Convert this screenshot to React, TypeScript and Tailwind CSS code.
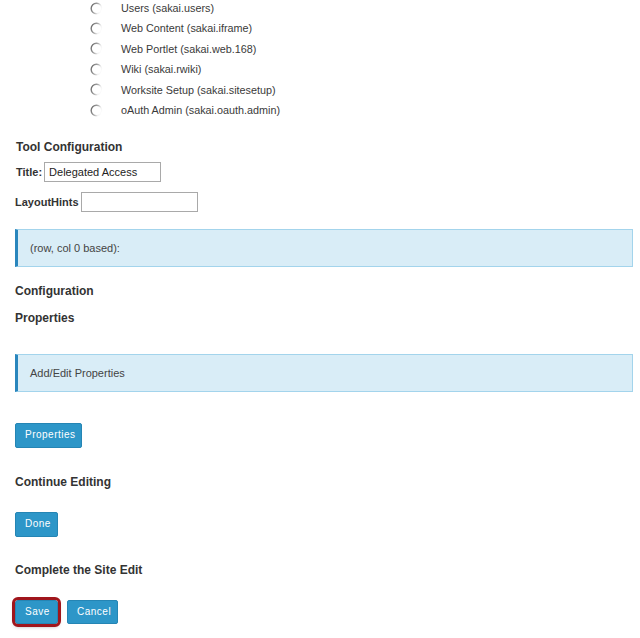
const tools = [
  "Users (sakai.users)",
  "Web Content (sakai.iframe)",
  "Web Portlet (sakai.web.168)",
  "Wiki (sakai.rwiki)",
  "Worksite Setup (sakai.sitesetup)",
  "oAuth Admin (sakai.oauth.admin)",
];

function Radio({ id }: { id: number }) {
  return (
    <svg width="13" height="13" viewBox="0 0 13 13" className="shrink-0">
      <defs>
        <linearGradient id={"rg" + id} x1="0" y1="0.3" x2="1" y2="0.7">
          <stop offset="0" stopColor="#6f6f6f" />
          <stop offset="0.45" stopColor="#a8a8a8" />
          <stop offset="0.75" stopColor="#f0f0f0" />
          <stop offset="1" stopColor="#ffffff" />
        </linearGradient>
      </defs>
      <circle cx="6.5" cy="6.5" r="5.3" fill="#fff" stroke={"url(#rg" + id + ")"} strokeWidth="1.4" />
    </svg>
  );
}

function Heading({ children, className = "" }: { children: React.ReactNode; className?: string }) {
  return (
    <h3 className={"h-[16px] leading-[16px] text-[12px] font-bold text-[#333] " + className}>
      {children}
    </h3>
  );
}

function InfoBox({ children, className = "" }: { children: React.ReactNode; className?: string }) {
  return (
    <div
      className={
        "h-[38px] w-[618px] flex items-center pl-[12px] bg-[#d9edf7] border border-[#a3d4ec] border-l-[3px] border-l-[#2a86bd] text-[11px] text-[#444] " +
        className
      }
    >
      {children}
    </div>
  );
}

function Button({ children, className = "" }: { children: React.ReactNode; className?: string }) {
  return (
    <button
      className={
        "h-[24px] px-[9px] bg-[#2d96c8] border border-[#2585b4] rounded-[2px] text-white text-[10px] tracking-[0.5px] leading-none " +
        className
      }
    >
      {children}
    </button>
  );
}

export default function App() {
  return (
    <div className="w-[640px] h-[638px] overflow-hidden bg-white font-['Liberation_Sans',Arial,sans-serif] text-[#333]">
      <ul className="-mt-[2px] pl-[90px]">
        {tools.map((t, i) => (
          <li key={t} className="h-[20.4px] flex items-center">
            <Radio id={i} />
            <span className="ml-[18px] text-[10.8px] text-[#3a3a3a]">{t}</span>
          </li>
        ))}
      </ul>

      <div className="pl-[15px]">
        <Heading className="mt-[18.6px] pl-[1px]">Tool Configuration</Heading>
        <div className="mt-[7px] flex items-center h-[20px] pl-[1px]">
          <span className="text-[11px] font-bold text-[#333] mr-[2px]">Title:</span>
          <input
            className="h-[20px] w-[117px] border border-[#a9a9a9] px-[4px] text-[11px] text-[#222] outline-none"
            defaultValue="Delegated Access"
          />
        </div>
        <div className="mt-[10px] flex items-center h-[20px]">
          <span className="text-[11px] font-bold text-[#333] mr-[2px]">LayoutHints</span>
          <input className="h-[20px] w-[117px] border border-[#a9a9a9] px-[4px] text-[11px] outline-none" />
        </div>

        <InfoBox className="mt-[17px]">(row, col 0 based):</InfoBox>

        <Heading className="mt-[16px]">Configuration</Heading>
        <Heading className="mt-[11px]">Properties</Heading>

        <InfoBox className="mt-[28px]">Add/Edit Properties</InfoBox>

        <Button className="mt-[31px] h-[25px] w-[67px]">Properties</Button>

        <Heading className="mt-[26px]">Continue Editing</Heading>
        <Button className="mt-[22px] h-[25px] w-[43px]">Done</Button>

        <Heading className="mt-[25px]">Complete the Site Edit</Heading>
        <div className="mt-[22px] flex items-center gap-[9px]">
          <Button className="w-[43px] outline-[3px] outline-solid outline-[#a0161c] outline-offset-0 rounded-[3px] shadow-[0_2px_4px_rgba(0,0,0,0.45)]">
            Save
          </Button>
          <Button className="w-[51px]">Cancel</Button>
        </div>
      </div>
    </div>
  );
}
